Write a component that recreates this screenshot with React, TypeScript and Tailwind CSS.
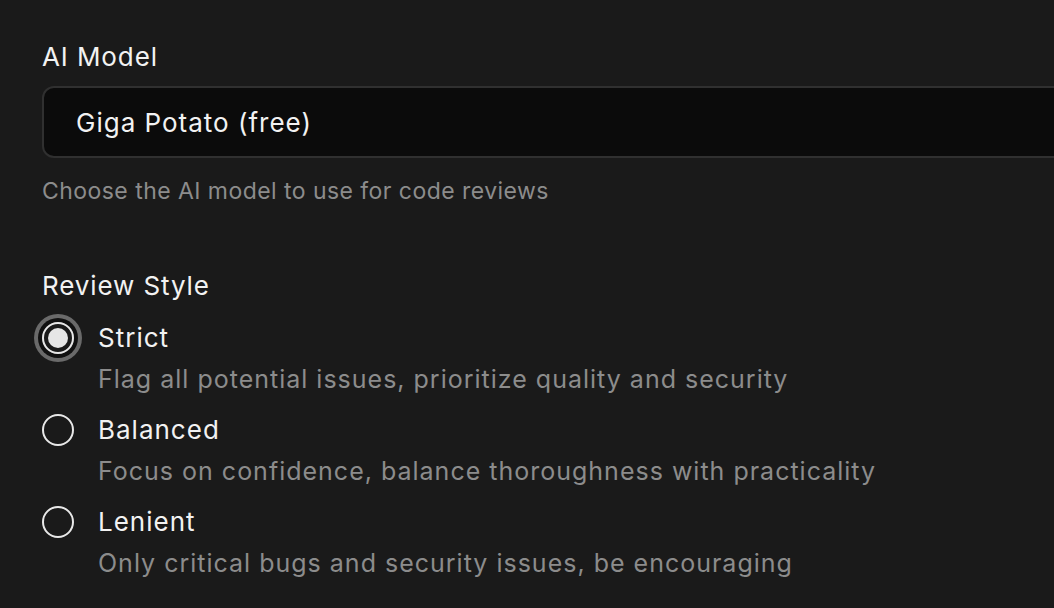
import React, { useState } from "react";

const options = [
  { id: "strict", title: "Strict", desc: "Flag all potential issues, prioritize quality and security" },
  { id: "balanced", title: "Balanced", desc: "Focus on confidence, balance thoroughness with practicality" },
  { id: "lenient", title: "Lenient", desc: "Only critical bugs and security issues, be encouraging" },
];

export default function App() {
  const [value, setValue] = useState("strict");
  return (
    <div className="min-h-screen w-full overflow-hidden bg-[#1a1a1a] pl-[42px] pt-[41px] font-['Inter',sans-serif] text-[#f2f2f2]">
      <div className="text-[26px] leading-[32px] tracking-[0.9px]">AI Model</div>
      <div className="mt-[13px] flex h-[72px] w-[1060px] items-center rounded-[12px] border-2 border-[#303030] bg-[#0b0b0b] pl-[32px] text-[26px] tracking-[1px]">
        Giga Potato (free)
      </div>
      <div className="mt-[17px] text-[23px] leading-[32px] tracking-[0.45px] text-[#8c8c8c]">Choose the AI model to use for code reviews</div>

      <div className="mt-[63px] text-[26px] leading-[32px] tracking-[0.9px]">Review Style</div>
      <div className="mt-[20px] flex flex-col gap-[19px]">
        {options.map((o) => {
          const checked = value === o.id;
          return (
            <label key={o.id} className="flex cursor-pointer items-start gap-[24px]" onClick={() => setValue(o.id)}>
              <span
                className={
                  checked
                    ? "flex h-[32px] w-[32px] shrink-0 items-center justify-center rounded-full border-2 border-[#e8e8e8] ring-4 ring-[#6a6a6a] ring-offset-4 ring-offset-[#111111]"
                    : "flex h-[32px] w-[32px] shrink-0 items-center justify-center rounded-full border-2 border-[#e8e8e8]"
                }
              >
                {checked && <span className="h-[20px] w-[20px] rounded-full bg-[#e6e6e6]" />}
              </span>
              <span className="flex flex-col">
                <span className="text-[26px] leading-[32px] tracking-[1px] text-[#f2f2f2]">{o.title}</span>
                <span className="mt-[9px] text-[25px] leading-[32px] tracking-[1px] text-[#8c8c8c]">{o.desc}</span>
              </span>
            </label>
          );
        })}
      </div>
    </div>
  );
}
